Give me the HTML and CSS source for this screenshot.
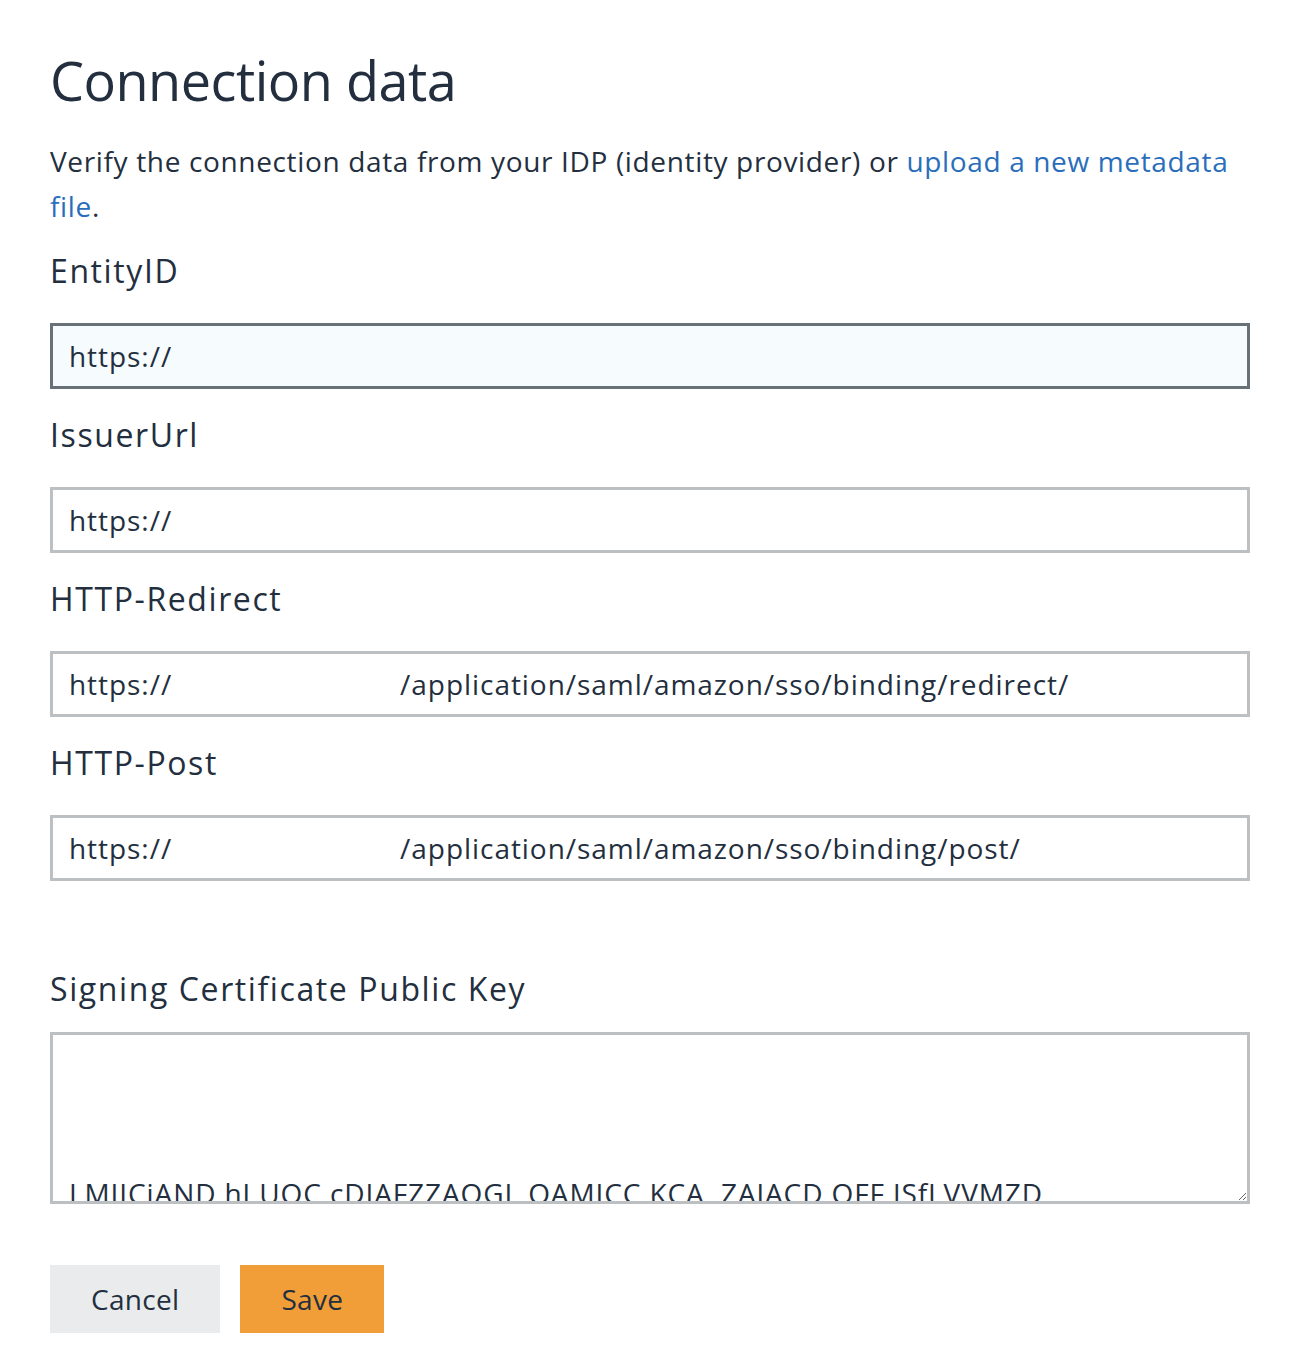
FILE: index.html
```html
<!DOCTYPE html>
<html lang="en">
  <head>
    <meta charset="UTF-8" />
    <meta name="viewport" content="width=device-width, initial-scale=1.0" />
    <title>Connection data</title>
    <link rel="stylesheet" href="styles.css">
  </head>
  <body>
    <main class="page">
      <h1 class="title">Connection data</h1>
      <p class="intro">
        Verify the connection data from your IDP (identity provider) or
        <a href="#" class="link">upload a new metadata file</a>.
      </p>

      <div class="field">
        <label class="label">EntityID</label>
        <div class="input focused">https://</div>
      </div>
      <div class="field">
        <label class="label">IssuerUrl</label>
        <div class="input">https://</div>
      </div>
      <div class="field">
        <label class="label">HTTP-Redirect</label>
        <div class="input">https://<span class="hidden-host"></span>/application/saml/amazon/sso/binding/redirect/</div>
      </div>
      <div class="field">
        <label class="label">HTTP-Post</label>
        <div class="input">https://<span class="hidden-host"></span>/application/saml/amazon/sso/binding/post/</div>
      </div>

      <div class="field cert">
        <label class="label">Signing Certificate Public Key</label>
        <textarea class="cert-box" readonly>&#10;&#10;&#10;&#10;LMIICiAND hJ UOC cDIAFZZAOGL QAMICC KCA  ZAJACD QFF JSfLVVMZD  M4hQwEAgIBAgIQcR3ZTzdQOAJ4LpwfNMYMTDANBgkqhkiG9w0BAQsFADA0MTIwMAYDVQQD</textarea>
      </div>

      <div class="actions">
        <button class="btn btn-cancel">Cancel</button>
        <button class="btn btn-save">Save</button>
      </div>
    </main>
  </body>
</html>
```

FILE: styles.css
```css
body {
  margin: 0;
  background-color: #fff;
  color: #232f3e;
  font-family: "Open Sans", sans-serif;
}
.page {
  width: 1200px;
  padding: 48px 0 40px 50px;
}
.title {
  margin: 0;
  font-size: 54px;
  font-weight: 500;
  line-height: 64px;
  letter-spacing: -0.5px;
}
.intro {
  margin: 27px 0 0;
  font-size: 28px;
  line-height: 45px;
  letter-spacing: 0.65px;
}
.link {
  color: #2a6ebb;
  text-decoration: none;
}
.field {
  display: flex;
  flex-direction: column;
  margin-top: 26px;
}
.intro + .field {
  margin-top: 22px;
}
.label {
  font-size: 32px;
  font-weight: 500;
  line-height: 40px;
  letter-spacing: 1.6px;
  margin-bottom: 32px;
}
.input {
  box-sizing: border-box;
  height: 66px;
  border: 3px solid #bcc0c3;
  padding: 0 16px;
  font-size: 28px;
  line-height: 60px;
  letter-spacing: 0.95px;
  white-space: nowrap;
  overflow: hidden;
}
.input.focused {
  border-color: #687078;
  background-color: #f6fbfe;
}
.hidden-host {
  display: inline-block;
  width: 228px;
}
.cert {
  margin-top: 88px;
}
.cert .label {
  margin-bottom: 23px;
}
.cert-box {
  box-sizing: border-box;
  height: 172px;
  border: 3px solid #bcc0c3;
  padding: 25px 16px 0;
  font-family: "Open Sans", sans-serif;
  font-size: 28px;
  line-height: 38px;
  letter-spacing: 0.9px;
  color: #232f3e;
  overflow: hidden;
  resize: vertical;
  outline: none;
}
.actions {
  display: flex;
  gap: 20px;
  margin-top: 61px;
}
.btn {
  border: none;
  height: 68px;
  padding: 0 41px;
  font-family: "Open Sans", sans-serif;
  font-size: 28px;
  font-weight: 500;
  letter-spacing: 0.3px;
  color: #232f3e;
  cursor: pointer;
}
.btn-cancel {
  background-color: #e9ebed;
}
.btn-save {
  background-color: #f19e39;
}
```
